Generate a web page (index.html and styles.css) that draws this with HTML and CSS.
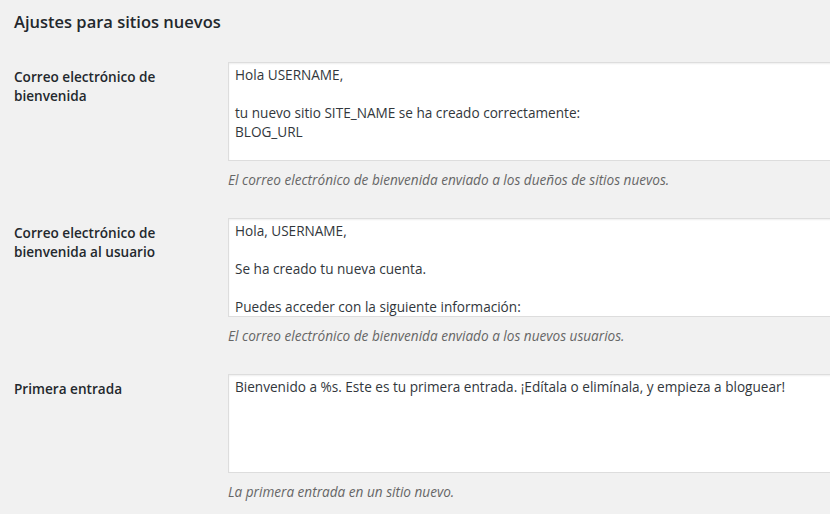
FILE: index.html
```html
<!DOCTYPE html>
<html>
<head>
	<title>Ajustes de la red</title>
	<meta charset="utf-8">
	<meta name="viewport" content="width=device-width, initial-scale=1">
	<link rel="stylesheet" href="styles.css">
</head>
<body>
	<div class="wrap">
		<h2 class="title">Ajustes para sitios nuevos</h2>
		<div class="formTable">
			<div class="row">
				<label class="rowLabel" for="welcome_email">Correo electrónico de bienvenida</label>
				<div class="field">
					<textarea id="welcome_email" class="box" rows="5">Hola USERNAME,

tu nuevo sitio SITE_NAME se ha creado correctamente:
BLOG_URL

Puedes acceder como administrador con la siguiente información:</textarea>
					<p class="description">El correo electrónico de bienvenida enviado a los dueños de sitios nuevos.</p>
				</div>
			</div>
			<div class="row">
				<label class="rowLabel" for="welcome_user_email">Correo electrónico de bienvenida al usuario</label>
				<div class="field">
					<textarea id="welcome_user_email" class="box" rows="5">Hola, USERNAME,

Se ha creado tu nueva cuenta.

Puedes acceder con la siguiente información:
Nombre de usuario: USERNAME</textarea>
					<p class="description">El correo electrónico de bienvenida enviado a los nuevos usuarios.</p>
				</div>
			</div>
			<div class="row">
				<label class="rowLabel" for="first_post">Primera entrada</label>
				<div class="field">
					<textarea id="first_post" class="box" rows="5">Bienvenido a %s. Este es tu primera entrada. ¡Edítala o elimínala, y empieza a bloguear!</textarea>
					<p class="description">La primera entrada en un sitio nuevo.</p>
				</div>
			</div>
		</div>
	</div>
</body>
</html>
```

FILE: styles.css
```css
html, body {
	margin: 0;
	background: #f1f1f1;
	overflow: hidden;
}
body {
	font-family: "Open Sans", "Noto Sans", sans-serif;
	font-size: 13.6px;
	color: #444;
}
.wrap {
	padding: 0 0 0 14px;
}
.title {
	margin: 0;
	padding-top: 10px;
	font-size: 16.5px;
	font-weight: 600;
	line-height: 24px;
	color: #23282d;
}
.formTable {
	margin-top: 13px;
}
.row {
	display: grid;
	grid-template-columns: 214px 760px;
}
.rowLabel {
	padding: 20px 10px 20px 0;
	font-weight: 600;
	line-height: 19px;
	color: #23282d;
}
.field {
	padding: 15px 0 13px;
}
.box {
	display: block;
	box-sizing: border-box;
	width: 760px;
	height: 99px;
	margin: 0;
	padding: 2px 6px;
	border: 1px solid #ddd;
	box-shadow: inset 0 1px 2px rgba(0, 0, 0, .07);
	background: #fff;
	font-family: inherit;
	font-size: 13.6px;
	line-height: 19px;
	color: #32373c;
	resize: none;
	overflow: hidden;
	outline: none;
}
.description {
	margin: 9px 0 0;
	font-style: italic;
	line-height: 20px;
	color: #666;
}
```
